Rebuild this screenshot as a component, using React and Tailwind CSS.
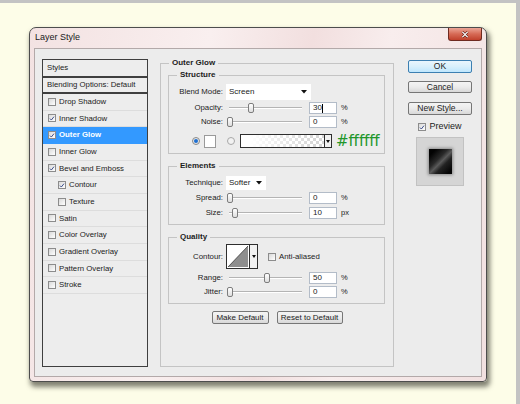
import React from 'react';

const styleRows = [
  { name: 'Drop Shadow' },
  { name: 'Inner Shadow', on: true },
  { name: 'Outer Glow', on: true, active: true },
  { name: 'Inner Glow' },
  { name: 'Bevel and Emboss', on: true },
  { name: 'Contour', on: true, sub: true },
  { name: 'Texture', sub: true },
  { name: 'Satin' },
  { name: 'Color Overlay' },
  { name: 'Gradient Overlay' },
  { name: 'Pattern Overlay' },
  { name: 'Stroke' },
];

function Check({ on }) {
  return (
    <span className="flex h-[8px] w-[8px] shrink-0 items-center justify-center border border-[#8c8c8c] bg-linear-to-br from-[#d9d9d9] to-white">
      {on && (
        <svg viewBox="0 0 8 8" className="h-[7px] w-[7px]">
          <path d="M1.3 4.1 L3.1 6 L6.7 1.5" fill="none" stroke="#3a4c8a" strokeWidth="1.3" />
        </svg>
      )}
    </span>
  );
}

function Arrow() {
  return (
    <svg viewBox="0 0 6 4" className="h-[4px] w-[6px]">
      <path d="M0 0 H6 L3 3.5 Z" fill="#111" />
    </svg>
  );
}

function Slider({ at }) {
  return (
    <div className="relative h-[12px] w-[80px]">
      <div className="absolute left-[3px] right-[4px] top-[5px] h-[2px] border-t border-b border-t-[#b4b4b4] border-b-white" />
      <div
        className="absolute top-[1px] h-[10px] w-[6px] rounded-[2px] border border-[#7d7d7d] bg-linear-to-b from-white to-[#dedede]"
        style={{ left: at }}
      />
    </div>
  );
}

function NumBox({ value, cursor }) {
  return (
    <div className="ml-[3px] flex h-[12px] w-[28px] items-center border border-[#b3bcc8] bg-white pl-[3px] text-[8px]">
      {value}
      {cursor && <span className="ml-[0.5px] h-[9px] w-px bg-black" />}
    </div>
  );
}

function Field({ label, children, className = '' }) {
  return (
    <div className={`flex items-center ${className}`}>
      <span className="w-[54px] shrink-0 text-right">{label}</span>
      <div className="ml-[3px] flex items-center">{children}</div>
    </div>
  );
}

function SliderRow({ label, at, value, unit, cursor, className }) {
  return (
    <Field label={label} className={`h-[12px] ${className}`}>
      <Slider at={at} />
      <NumBox value={value} cursor={cursor} />
      <span className="ml-[4px] text-[7.5px]">{unit}</span>
    </Field>
  );
}

function Group({ title, className = '', children }) {
  return (
    <fieldset className={`w-[217px] border border-[#c4c4c4] ${className}`}>
      <legend className="ml-[8px] px-[3px] text-[8px] font-bold leading-[10px] text-[#1c1c1c]">{title}</legend>
      {children}
    </fieldset>
  );
}

function GrayButton({ children, className = '' }) {
  return (
    <div className={`flex items-center justify-center rounded-[2px] border border-[#767676] bg-linear-to-b from-[#f4f4f4] via-[#ebebeb] to-[#d8d8d8] text-[8.5px] leading-none ${className}`}>
      {children}
    </div>
  );
}

export default function App() {
  return (
    <div className="h-[404px] w-[520px] overflow-hidden border-t-[3px] border-r-[4px] border-[#c3c3c3] bg-[#fdfde8] pl-[29px] pt-[24px] font-['Liberation_Sans',Arial,sans-serif] text-[7.8px] text-[#222]">
      <div className="flex h-[355px] w-[458px] flex-col rounded-t-[7px] rounded-b-[4px] border border-[#4d4d4d] bg-[linear-gradient(100deg,#f3e2e2_0%,#f9efef_35%,#f2dfdf_55%,#f8eded_70%,#f1e0e0_100%)] shadow-[2px_4px_5px_1px_rgba(30,30,20,0.55)]">
        <div className="flex h-[20px] items-start justify-between pl-[5px] pr-[4px]">
          <span className="mt-[3px] text-[9px] leading-[12px] text-[#1a1a1a]">Layer Style</span>
          <div className="flex h-[13px] w-[34px] items-center justify-center rounded-b-[3px] border border-t-0 border-[#6e2a20] bg-linear-to-b from-[#eba596] via-[#d66a55] to-[#c0402b]">
            <svg viewBox="0 0 9 8" className="h-[7px] w-[8px]">
              <path d="M1.5 1 L7.5 7 M7.5 1 L1.5 7" stroke="#5a1a12" strokeWidth="2.6" />
              <path d="M1.5 1 L7.5 7 M7.5 1 L1.5 7" stroke="#fff" strokeWidth="1.5" />
            </svg>
          </div>
        </div>

        <div className="mx-[4px] mb-[4px] flex flex-1 items-start border border-[#b3a9a9] bg-[#ececec] pl-[7px]">
          <div className="mt-[10px] h-[308px] w-[106px] shrink-0 border border-[#3f3f3f] bg-[#ededed]">
            <div className="flex h-[18px] items-center border-b-2 border-[#3f3f3f] pl-[4px]">Styles</div>
            <div className="flex h-[16px] items-center border-b-2 border-[#3f3f3f] pl-[4px]">Blending Options: Default</div>
            {styleRows.map((r) => (
              <div
                key={r.name}
                className={`flex h-[16.67px] items-center gap-[3px] border-b ${
                  r.active ? 'border-[#3399ff] bg-[#3399ff] font-bold text-white' : 'border-[#dddddd]'
                } ${r.sub ? 'pl-[15px]' : 'pl-[5px]'}`}
              >
                <Check on={r.on} />
                <span>{r.name}</span>
              </div>
            ))}
          </div>

          <fieldset className="ml-[12px] mt-[9px] h-[309px] w-[234px] shrink-0 border border-[#c4c4c4]">
            <legend className="ml-[8px] px-[3px] text-[8px] font-bold leading-[10px] text-[#1c1c1c]">Outer Glow</legend>
            <div className="pl-[7px]">
              <Group title="Structure" className="mt-[2px] h-[84px]">
                <Field label="Blend Mode:" className="mt-[4px] h-[16px]">
                  <div className="flex h-[16px] w-[85px] items-center justify-between bg-white pl-[3px] pr-[4px] text-[8px]">
                    <span>Screen</span>
                    <Arrow />
                  </div>
                </Field>
                <SliderRow label="Opacity:" at={22} value="30" unit="%" cursor className="mt-[2px]" />
                <SliderRow label="Noise:" at={1} value="0" unit="%" className="mt-[2px]" />
                <div className="mt-[6px] flex h-[14px] items-center pl-[23px]">
                  <span className="flex h-[8px] w-[8px] items-center justify-center rounded-full border border-[#8a8a8a] bg-[#e8e8e8]">
                    <span className="h-[4px] w-[4px] rounded-full bg-[#1f6fd0]" />
                  </span>
                  <span className="ml-[4px] h-[13px] w-[12px] border border-[#9a9a9a] bg-white" />
                  <span className="ml-[11px] h-[8px] w-[8px] rounded-full border border-[#a8a8a8] bg-[#f2f2f2]" />
                  <div className="ml-[5px] flex h-[14px] w-[92px] border border-[#2e2e2e]">
                    <div className="h-full flex-1 bg-[repeating-conic-gradient(#d6d6d6_0%_25%,#ffffff_0%_50%)] bg-[length:6px_6px]">
                      <div className="h-full w-full bg-linear-to-r from-white from-10% to-transparent to-90%" />
                    </div>
                    <div className="flex w-[7px] items-center justify-center border-l border-[#2e2e2e] bg-[#f2f2f2]">
                      <svg viewBox="0 0 4 3" className="h-[3px] w-[4px]">
                        <path d="M0 0 H4 L2 3 Z" fill="#111" />
                      </svg>
                    </div>
                  </div>
                  <span className="ml-[4px] font-['DejaVu_Sans',sans-serif] text-[15px] leading-none text-[#21962a]">#ffffff</span>
                </div>
              </Group>

              <Group title="Elements" className="mt-[7px] h-[64px]">
                <Field label="Technique:" className="mt-[5px] h-[14px]">
                  <div className="flex h-[14px] w-[40px] items-center justify-between bg-white pl-[3px] pr-[4px] text-[8px]">
                    <span>Softer</span>
                    <Arrow />
                  </div>
                </Field>
                <SliderRow label="Spread:" at={1} value="0" unit="%" className="mt-[2px]" />
                <SliderRow label="Size:" at={6} value="10" unit="px" className="mt-[3px]" />
              </Group>

              <Group title="Quality" className="mt-[7px] h-[72px]">
                <Field label="Contour:" className="mt-[2px] h-[25px]">
                  <div className="flex h-[25px] w-[32px] border border-[#2e2e2e] bg-white">
                    <svg viewBox="0 0 22 23" className="h-[23px] w-[22px]">
                      <path d="M1 22 L21 1 L21 22 Z" fill="#8e8e8e" />
                      <path d="M1 22 L21 1" stroke="#3a3a3a" strokeWidth="0.8" />
                    </svg>
                    <div className="flex w-[8px] items-center justify-center border-l border-[#2e2e2e] bg-[#f2f2f2]">
                      <svg viewBox="0 0 4 3" className="h-[3px] w-[4px]">
                        <path d="M0 0 H4 L2 3 Z" fill="#111" />
                      </svg>
                    </div>
                  </div>
                  <div className="ml-[10px] flex items-center gap-[3px]">
                    <Check />
                    <span>Anti-aliased</span>
                  </div>
                </Field>
                <SliderRow label="Range:" at={38} value="50" unit="%" className="mt-[3px]" />
                <SliderRow label="Jitter:" at={1} value="0" unit="%" className="mt-[2px]" />
              </Group>
            </div>
            <div className="mt-[7px] flex justify-center gap-[8px]">
              <GrayButton className="h-[13px] w-[57px] text-[8px]">Make Default</GrayButton>
              <GrayButton className="h-[13px] w-[66px] text-[8px]">Reset to Default</GrayButton>
            </div>
          </fieldset>

          <div className="ml-[14px] mt-[11px] flex w-[64px] shrink-0 flex-col items-center">
            <div className="flex h-[13px] w-full items-center justify-center rounded-[2px] border border-[#3c7fb1] bg-linear-to-b from-[#eaf6fd] via-[#d9f0fc] to-[#bee6fd] text-[8.5px] leading-none">
              OK
            </div>
            <GrayButton className="mt-[8px] h-[12px] w-full">Cancel</GrayButton>
            <GrayButton className="mt-[9px] h-[13px] w-full">New Style...</GrayButton>
            <div className="mt-[7px] flex h-[10px] items-center gap-[3px] text-[9px]">
              <Check on />
              <span>Preview</span>
            </div>
            <div className="mt-[5px] flex h-[49px] w-[48px] items-center justify-center border border-[#c2c2c2] bg-[#d5d5d5]">
              <div className="h-[25px] w-[23px] bg-[linear-gradient(135deg,#030303_15%,#2a2a2a_40%,#5a5a5a_52%,#222_65%,#050505_90%)] shadow-[0_0_3px_1px_#8a8a8a]" />
            </div>
          </div>
        </div>
      </div>
    </div>
  );
}
